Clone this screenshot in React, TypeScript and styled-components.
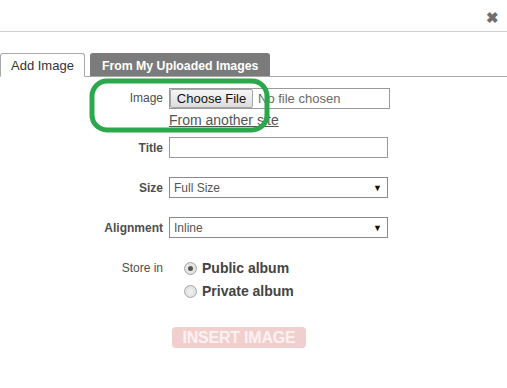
import React from 'react';
import styled, { createGlobalStyle } from 'styled-components';

const GlobalStyle = createGlobalStyle`
  html, body {
    margin: 0;
    padding: 0;
    background: #ffffff;
    font-family: "Liberation Sans", Arial, sans-serif;
  }
`;

const Dialog = styled.div`
  position: relative;
  width: 507px;
  height: 388px;
  background: #ffffff;
  overflow: hidden;
`;

const Header = styled.div`
  height: 31px;
  border-bottom: 1px solid #cfcfcf;
  display: flex;
  justify-content: flex-end;
  align-items: center;
  padding-right: 8px;
`;

const Close = styled.span`
  font-size: 15px;
  font-weight: bold;
  color: #6f6f6f;
  line-height: 1;
  margin-top: 4px;
`;

const TabBar = styled.div`
  margin-top: 20px;
  display: flex;
  align-items: flex-end;
  gap: 5px;
  border-bottom: 1px solid #a8a8a8;
  height: 24px;
`;

const Tab = styled.div<{ $active?: boolean }>`
  height: ${p => (p.$active ? '24px' : '23px')};
  margin-bottom: ${p => (p.$active ? '-1px' : '0')};
  box-sizing: border-box;
  padding: 0 ${p => (p.$active ? '10px' : '11px')};
  display: flex;
  align-items: center;
  font-size: ${p => (p.$active ? '13px' : '12.3px')};
  font-weight: ${p => (p.$active ? 'normal' : 'bold')};
  color: ${p => (p.$active ? '#333333' : '#ffffff')};
  background: ${p => (p.$active ? '#ffffff' : '#7b7b7b')};
  border: 1px solid ${p => (p.$active ? '#a8a8a8' : '#7b7b7b')};
  border-bottom: ${p => (p.$active ? '1px solid #ffffff' : 'none')};
  border-radius: 3px 3px 0 0;
  padding-top: 1px;
`;

const Form = styled.div`
  padding-top: 11px;
  display: flex;
  flex-direction: column;
`;

const Row = styled.div<{ $gap?: number }>`
  display: flex;
  align-items: center;
  margin-bottom: ${p => p.$gap ?? 0}px;
`;

const TopRow = styled(Row)`
  align-items: flex-start;
`;

const Label = styled.div<{ $bold?: boolean }>`
  width: 163px;
  padding-right: 6px;
  text-align: right;
  font-size: 12px;
  font-weight: ${p => (p.$bold ? 'bold' : 'normal')};
  color: #4f4f4f;
  flex-shrink: 0;
`;

const Field = styled.div`
  display: flex;
  flex-direction: column;
`;

const FileBox = styled.div`
  width: 221px;
  height: 21px;
  box-sizing: border-box;
  border: 1px solid #9a9a9a;
  display: flex;
  align-items: center;
  gap: 5px;
`;

const FileButton = styled.div`
  width: 83px;
  height: 19px;
  box-sizing: border-box;
  border: 1px solid #a6a6a6;
  border-radius: 2px;
  background: linear-gradient(#f6f6f6, #dddddd);
  font-size: 13px;
  color: #111111;
  display: flex;
  align-items: center;
  justify-content: center;
`;

const FileText = styled.span`
  font-size: 13px;
  color: #6a6a6a;
`;

const Link = styled.a`
  margin-top: 3px;
  font-size: 14px;
  color: #555555;
  text-decoration: underline;
  line-height: 16px;
`;

const TextBox = styled.div`
  width: 219px;
  height: 21px;
  box-sizing: border-box;
  border: 1px solid #9a9a9a;
`;

const Select = styled.div`
  width: 219px;
  height: 21px;
  box-sizing: border-box;
  border: 1px solid #8a8a8a;
  display: flex;
  align-items: center;
  justify-content: space-between;
  padding: 0 5px 0 4px;
  font-size: 12px;
  color: #555555;
`;

const Arrow = styled.span`
  font-size: 9px;
  color: #111111;
`;

const Radios = styled.div`
  display: flex;
  flex-direction: column;
  gap: 7px;
  padding-left: 15px;
`;

const RadioItem = styled.div`
  display: flex;
  align-items: center;
  gap: 5px;
  font-size: 14px;
  font-weight: bold;
  color: #444444;
`;

const RadioDot = styled.span<{ $checked?: boolean }>`
  width: 11px;
  height: 11px;
  border-radius: 50%;
  border: 1px solid #a8a8a8;
  background: radial-gradient(circle, #f2f2f2 0%, #d8d8d8 100%);
  display: flex;
  align-items: center;
  justify-content: center;
  &::after {
    content: '';
    width: 5px;
    height: 5px;
    border-radius: 50%;
    background: ${p => (p.$checked ? '#555555' : 'transparent')};
  }
`;

const InsertButton = styled.div`
  margin-left: 172px;
  width: 134px;
  height: 21px;
  border-radius: 4px;
  background: #f2cfcf;
  color: #fdf1f1;
  font-size: 16px;
  font-weight: bold;
  display: flex;
  align-items: center;
  justify-content: center;
  letter-spacing: -0.2px;
`;

const Annotation = styled.svg`
  position: absolute;
  left: 88px;
  top: 77px;
  pointer-events: none;
`;

export default function App() {
  return (
    <>
      <GlobalStyle />
      <Dialog>
        <Header>
          <Close>✖</Close>
        </Header>
        <TabBar>
          <Tab $active>Add Image</Tab>
          <Tab>From My Uploaded Images</Tab>
        </TabBar>
        <Form>
          <TopRow $gap={9}>
            <Label style={{ lineHeight: '21px' }}>Image</Label>
            <Field>
              <FileBox>
                <FileButton>Choose File</FileButton>
                <FileText>No file chosen</FileText>
              </FileBox>
              <Link>From another site</Link>
            </Field>
          </TopRow>
          <Row $gap={19}>
            <Label $bold>Title</Label>
            <TextBox />
          </Row>
          <Row $gap={19}>
            <Label $bold>Size</Label>
            <Select>
              Full Size<Arrow>▼</Arrow>
            </Select>
          </Row>
          <Row $gap={22}>
            <Label $bold>Alignment</Label>
            <Select>
              Inline<Arrow>▼</Arrow>
            </Select>
          </Row>
          <TopRow $gap={28}>
            <Label style={{ lineHeight: '16px' }}>Store in</Label>
            <Radios>
              <RadioItem>
                <RadioDot $checked />
                Public album
              </RadioItem>
              <RadioItem>
                <RadioDot />
                Private album
              </RadioItem>
            </Radios>
          </TopRow>
          <InsertButton>INSERT IMAGE</InsertButton>
        </Form>
        <Annotation width="184" height="58" viewBox="0 0 184 58">
          <rect x="4" y="4" width="175" height="49" rx="15" fill="none" stroke="#2aa84b" strokeWidth="5" />
        </Annotation>
      </Dialog>
    </>
  );
}
